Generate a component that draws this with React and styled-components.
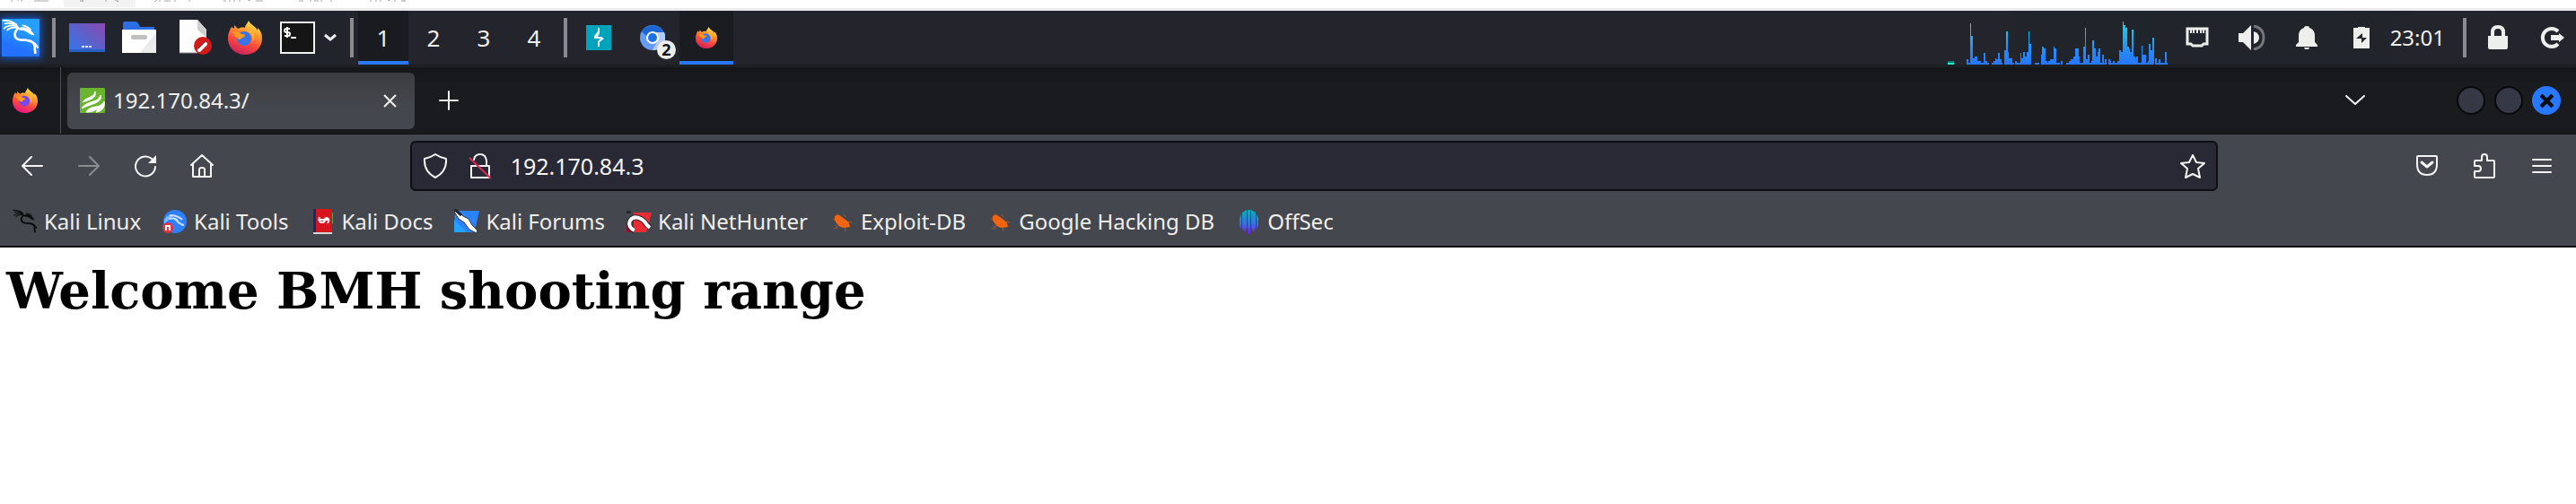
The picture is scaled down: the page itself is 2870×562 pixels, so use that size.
import React from "react";
import styled, { createGlobalStyle, css } from "styled-components";

const GlobalStyle = createGlobalStyle`
  *, *::before, *::after { box-sizing: border-box; }
  html, body { margin: 0; background: #ffffff; }
  body { font-family: "Noto Sans", sans-serif; color: #eeeeec; }
  svg { display: block; flex: none; }
`;

const plainButton = css`
  display: flex;
  align-items: center;
  justify-content: center;
  flex: none;
  margin: 0;
  padding: 0;
  border: 0;
  background: transparent;
  color: inherit;
  font: inherit;
  cursor: pointer;
`;

/* ---------- host window strip ---------- */
const HostStrip = styled.div`
  height: 12px;
  overflow: hidden;
  background: #ffffff;
  border-bottom: 3px solid #ebebeb;
`;

/* ---------- desktop panel ---------- */
const Panel = styled.header`
  display: flex;
  align-items: stretch;
  height: 63px;
  padding: 0 12px 0 2px;
  background: linear-gradient(90deg, #20242d, #24242c 22%, #24242c 76%, #20242b 82%, #24242c);
  border-bottom: 3px solid #1d1e22;
`;

const MenuButton = styled.button`
  ${plainButton}
  align-self: center;
  width: 42px;
  height: 42px;
  background: linear-gradient(200deg, #249eff 30%, #2470ff 75%);
  box-shadow: 0 0 8px 2px #1557c8;
  color: #ffffff;
`;

const Separator = styled.span`
  flex: none;
  align-self: center;
  width: 4px;
  height: 44px;
  margin: 0 ${(p) => p.$right}px 0 ${(p) => p.$left}px;
  background: #8b8b8f;
`;

const Launcher = styled.button`
  ${plainButton}
  width: ${(p) => p.$width || 58}px;
`;

const Workspace = styled.button`
  ${plainButton}
  width: 56px;
  padding-top: 4px;
  font-size: 26px;
  border-bottom: 4px solid ${(p) => (p.$active ? "#2777ff" : "transparent")};
  background: ${(p) => (p.$active ? "#1a1b20" : "transparent")};
`;

const Task = styled.button`
  ${plainButton}
  position: relative;
  width: 60px;
  padding-top: 4px;
  border-bottom: 4px solid ${(p) => (p.$active ? "#2777ff" : "transparent")};
  background: ${(p) => (p.$active ? "#1b1b22" : "transparent")};
`;

const Badge = styled.span`
  position: absolute;
  right: 4px;
  bottom: 2px;
  width: 21px;
  height: 21px;
  border-radius: 50%;
  background: #eeeeec;
  color: #111111;
  font: 700 18px/21px "Noto Sans", sans-serif;
  text-align: center;
`;

const Tray = styled.div`
  display: flex;
  align-items: stretch;
  margin-left: auto;
`;

const TrayIcons = styled.div`
  display: flex;
  gap: 33px;
  margin-left: ${(p) => p.$left || 0}px;
`;

const TrayButton = styled.button`
  ${plainButton}
  width: 28px;
`;

const Clock = styled.time`
  align-self: center;
  margin-left: 18px;
  font-size: 24px;
  line-height: 32px;
`;

/* ---------- browser tabs ---------- */
const TabBar = styled.div`
  display: flex;
  align-items: center;
  height: 75px;
  padding-right: 17px;
  background: linear-gradient(#141519, #1a1b1f 25%);
  border-bottom: 1px solid #0e0e11;
`;

const PinnedView = styled.button`
  ${plainButton}
  width: 68px;
  height: 100%;
  padding-right: 12px;
  border-right: 1px solid #4a4b50;
  margin-right: 7px;
`;

const Tab = styled.div`
  display: flex;
  align-items: center;
  flex: none;
  width: 387px;
  height: 63px;
  padding: 0 14px;
  border-radius: 6px;
  background: linear-gradient(#3b3c40, #45474e 60%);
`;

const TabTitle = styled.span`
  flex: 1;
  padding-left: 9px;
  font-size: 24px;
  line-height: 32px;
`;

const TabClose = styled.button`
  ${plainButton}
  width: 28px;
  height: 28px;
`;

const ToolButton = styled.button`
  ${plainButton}
  width: ${(p) => p.$width || 63}px;
  height: 56px;
  opacity: ${(p) => (p.disabled ? 0.4 : 1)};
`;

const WindowControls = styled.div`
  display: flex;
  gap: 10px;
  margin-left: 88px;
`;

const WindowControl = styled.button`
  ${plainButton}
  width: 32px;
  height: 32px;
  border: ${(p) => (p.$close ? 0 : "2px solid #08090b")};
  border-radius: 50%;
  background: ${(p) => (p.$close ? "#2777ff" : "#353945")};
  color: #0b0c10;
`;

const Push = styled.span`
  flex: 1;
`;

/* ---------- browser toolbar ---------- */
const Toolbar = styled.div`
  display: flex;
  align-items: center;
  height: 63px;
  padding: 7px 6px 0 4px;
  background: #44474e;
`;

const Spring = styled.span`
  flex: 10 1 0;
`;

const UrlBar = styled.label`
  display: flex;
  align-items: center;
  flex: 99 1 0;
  min-width: 0;
  height: 56px;
  padding: 0 12px;
  border: 2px solid #0d0e11;
  border-radius: 6px;
  background: #282934;
`;

const UrlInput = styled.input`
  flex: 1;
  min-width: 0;
  height: 40px;
  margin: 0 0 0 20px;
  padding: 0;
  border: 0;
  outline: 0;
  background: transparent;
  color: #f4f4f4;
  font: 25px/32px "Noto Sans", sans-serif;
`;

const UrlIcon = styled.button`
  ${plainButton}
  width: 28px;
  height: 40px;
  margin-right: ${(p) => p.$gap || 0}px;
`;

const Bookmarks = styled.nav`
  display: flex;
  align-items: center;
  gap: 24px;
  height: 63px;
  padding: 6px 14px 0;
  overflow: hidden;
  background: #44474e;
  border-bottom: 2px solid #0c0c0f;
`;

const Bookmark = styled.a`
  display: flex;
  align-items: center;
  flex: none;
  gap: 7px;
  color: inherit;
  font-size: 24px;
  line-height: 32px;
  text-decoration: none;
  white-space: nowrap;
`;

const Page = styled.main`
  padding: 16px 7px;
  color: #000000;
`;

const Title = styled.h1`
  margin: 0;
  font: 700 56px/64px "DejaVu Serif", serif;
`;

/* ---------- drawings ---------- */
const HostTabs = () => (
  <svg width="470" height="9" viewBox="0 0 470 9" aria-hidden="true">
    <path d="M71 0h80v6q0 2-2 2H73q-2 0-2-2z" fill="#f3f3f3" />
    <path
      d="M13 0v2M20 0v1M24 0v2M38 1h16M89 1h4M92 0v2M118 0v2M128 0l4 2M131 0v2M172 2l3-2M178 0v2M183 1h7M195 0v2M211 0v2M249 1h3M256 0v2M261 0v2M267 0v2M276 1l3-1M285 1h8M333 1h5M346 0v2M350 1h5M358 0v2M369 0v2M413 0v2M419 0v2M424 0v2M432 1l3-1M440 0v2M447 1h5M450 0v2"
      fill="none"
      stroke="#aaaaaa"
      strokeWidth="1"
    />
  </svg>
);

const Dragon = ({ size, color }) => (
  <svg width={size} height={size} viewBox="0 0 126 126">
    <g fill="none" stroke={color} strokeLinecap="round" strokeLinejoin="round">
      <path d="M4 6q24-2 44 12M10 16q20-4 40 6M8 32q14-14 42-8M18 38q12-12 34-8" strokeWidth="5" />
      <path d="M44 22q8 2 10 10-12 12-10 24 2 12 18 14 28 0 40 8 8 6 8 14 0 10 2 22" strokeWidth="8" />
      <path d="M100 76q14 6 20 20" strokeWidth="6" />
      <path d="M54 32q20-6 34 2 12 6 20 20-14-2-22-10-10-8-26-8z" fill={color} strokeWidth="3" />
      <path d="M70 22q18 4 26 14" strokeWidth="5" />
    </g>
  </svg>
);

const Firefox = ({ size, id, purple }) => (
  <svg width={size} height={size} viewBox="0 0 38 38">
    <defs>
      <linearGradient id={id} x1="0.75" y1="0" x2="0.35" y2="1">
        <stop offset="0" stopColor="#fff04a" />
        <stop offset="0.35" stopColor="#ff9a2e" />
        <stop offset="0.65" stopColor="#ff4a3d" />
        <stop offset="1" stopColor={purple ? "#e8128c" : "#c8205c"} />
      </linearGradient>
    </defs>
    <path
      d="M23 0c-1 3-4 5-4 8-3-1-6 0-8 1L7 5v4L4 7C2 10 0 14 0 20c0 10 8 18 19 18s19-8 19-18c0-6-2-9-5-12v3C31 6 25 5 23 0z"
      fill={`url(#${id})`}
    />
    <circle cx="18" cy="20" r="8" fill={purple ? "#7a48e8" : "#3a73e8"} />
    <path d="M6 13c4-1 7 0 9 2 2 0 4 0 4 2-2 2-4 2-5 4-3 0-6-3-8-8z" fill="#ff9c1c" />
    <path d="M22 12c5 2 7 7 5 12 3-3 3-9 0-12-1-2-3-2-5 0z" fill="#ffb43a" />
  </svg>
);

const DesktopIcon = () => (
  <svg width="40" height="32" viewBox="0 0 40 32">
    <defs>
      <linearGradient id="desk" x1="0" y1="1" x2="1" y2="0.1">
        <stop offset="0" stopColor="#2e78f0" />
        <stop offset="0.5" stopColor="#5a62cc" />
        <stop offset="1" stopColor="#844bb0" />
      </linearGradient>
    </defs>
    <path d="M0 0h40v32H0z" fill="url(#desk)" />
    <path d="M0 29h40v3H0z" fill="#2660c0" />
    <path d="M14 25h3v2h-3zM18 25h3v2h-3zM22 25h3v2h-3z" fill="#e8ecff" />
  </svg>
);

const FolderIcon = () => (
  <svg width="38" height="36" viewBox="0 0 38 36">
    <path d="M1 10V2q0-2 2-2h12q2 0 3 2l2 4h16v5H1z" fill="#2d6ee4" />
    <path d="M0 9h38v26H0z" fill="#ffffff" />
    <path d="M38 12v23H20q8-10 18-23z" fill="#ececec" />
    <rect x="10" y="15" width="18" height="5" rx="2" fill="#c0c0c0" />
  </svg>
);

const DocumentIcon = () => (
  <svg width="48" height="40" viewBox="0 0 48 40">
    <path d="M11 0h20l10 11v26H11z" fill="#fdfdfd" />
    <path d="M31 0l10 12v8L31 11z" fill="#cfcfcf" />
    <path d="M11 37h20" stroke="#8a8a8a" />
    <circle cx="37" cy="29" r="10" fill="#d11a1a" />
    <path d="M33 34l7-7" stroke="#fff" strokeWidth="4" strokeLinecap="round" />
    <path d="M32 32l8-8" stroke="#a80e0e" strokeWidth="1" />
  </svg>
);

const TerminalIcon = () => (
  <svg width="39" height="36" viewBox="0 0 39 36">
    <path d="M1 1h37v34H1z" fill="#151515" stroke="#f2f2f2" strokeWidth="2" />
    <path d="M11 8H7q-2 0-2 2t2 2h2q2 0 2 2t-2 2H5M8 6v12M12 18h6" fill="none" stroke="#fff" strokeWidth="2" />
  </svg>
);

const PanelChevron = () => (
  <svg width="14" height="10" viewBox="0 0 14 10">
    <path d="M1 2l6 5 6-5" fill="none" stroke="#eeeeec" strokeWidth="3" />
  </svg>
);

const BurpIcon = () => (
  <svg width="28" height="28" viewBox="0 0 28 28">
    <path d="M0 0h28v28H0z" fill="#00a3bb" />
    <path d="M13 3h2v6l-2 4h4l3 2-5 4v5h-2v-6l3-3H9v-3l4-5z" fill="#e8fbff" />
  </svg>
);

const ChromiumIcon = () => (
  <svg width="28" height="28" viewBox="0 0 28 28">
    <circle cx="14" cy="14" r="14" fill="#659cf5" />
    <path d="M2 7a14 14 0 0 1 24 0l1 2H14a6 6 0 0 0-6 4z" fill="#1b66d2" />
    <path d="M14 8h13a14 14 0 0 1-13 20l6-11z" fill="#b2cdfb" />
    <circle cx="14" cy="14" r="7" fill="#ffffff" />
    <circle cx="14" cy="14" r="5" fill="#1a73e8" />
  </svg>
);

// Each entry: start, end and top of a bar, in thirds of a pixel.
const LOAD = [
  [123,129,198],[129,135,210],[135,138,78],[138,144,120],[144,150,195],[150,159,189],[159,171,204],[171,180,210],
  [180,186,177],[186,192,204],[192,198,210],[207,213,210],[213,219,204],[219,222,195],[222,228,198],[228,234,177],
  [234,240,198],[240,243,210],[249,255,168],[255,261,105],[261,264,174],[264,276,195],[276,282,210],[285,291,204],
  [291,303,210],[303,306,177],[306,312,195],[312,318,174],[318,324,189],[324,330,174],[330,333,105],[333,339,147],
  [351,366,210],[372,375,183],[375,381,156],[381,387,162],[387,393,204],[393,396,210],[396,402,204],[402,414,198],
  [414,417,156],[417,423,162],[423,435,210],[438,444,204],[456,465,210],[465,471,204],[471,480,198],[480,486,189],
  [486,498,162],[498,501,189],[501,513,210],[513,519,156],[519,522,93],[522,528,198],[528,534,183],[534,540,210],
  [540,543,204],[543,549,135],[549,555,162],[555,561,189],[561,564,174],[564,570,162],[570,576,210],[576,582,183],
  [582,585,210],[585,591,198],[597,603,198],[603,606,204],[606,612,210],[612,618,204],[618,627,210],[627,633,204],
  [633,639,168],[639,645,174],[645,648,72],[648,654,84],[654,660,93],[660,666,156],[666,669,162],[669,675,174],
  [675,681,99],[681,687,189],[687,690,195],[690,696,189],[696,708,210],[708,711,153],[711,723,183],[723,729,210],
  [729,732,204],[732,738,147],[738,744,168],[744,750,126],[753,759,195],[759,765,210],[765,771,198],[771,786,210],
  [786,792,174],[792,795,210],
];

const LoadGraph = () => (
  <svg width="245" height="60" viewBox="60 36 735 180" shapeRendering="crispEdges" aria-label="CPU load">
    <defs>
      <linearGradient id="load" gradientUnits="userSpaceOnUse" x1="0" y1="72" x2="0" y2="216">
        <stop offset="0" stopColor="#0cdbf0" />
        <stop offset="0.2" stopColor="#13c4ee" />
        <stop offset="0.7" stopColor="#2489fa" />
        <stop offset="1" stopColor="#2777ff" />
      </linearGradient>
    </defs>
    <path d="M60 204h21v6H60z" fill="#117a74" />
    <path d="M60 210h21v6H60z" fill="#0dffe0" />
    <path d={LOAD.map(([a, b, y]) => `M${a} ${y}H${b}V216H${a}z`).join("")} fill="url(#load)" />
  </svg>
);

const EthernetIcon = () => (
  <svg width="26" height="24" viewBox="0 0 26 24">
    <path d="M2 2h22v17h-4l-2 2H8l-2-2H2z" fill="none" stroke="#eeeeec" strokeWidth="3" />
    <path d="M6 3v4M9 3v4M13 3v4M17 3v4M20 3v4" stroke="#eeeeec" strokeWidth="2" />
  </svg>
);

const VolumeIcon = () => (
  <svg width="30" height="28" viewBox="0 0 30 28">
    <path d="M0 9h5l9-9v28l-9-9H0z" fill="#eeeeec" />
    <path d="M17 7q6 2 6 7t-6 7z" fill="#eeeeec" />
    <path d="M17 1q11 2 11 13T17 27" fill="none" stroke="#75767b" strokeWidth="3" />
  </svg>
);

const BellIcon = () => (
  <svg width="24" height="26" viewBox="0 0 24 26">
    <path d="M12 0q3 0 3 2 6 2 6 9v7l3 3v2H0v-2l3-3v-7q0-7 6-9 0-2 3-2zM9 24h6l-1 2h-4z" fill="#eeeeec" />
  </svg>
);

const BatteryIcon = () => (
  <svg width="18" height="24" viewBox="0 0 18 24">
    <path d="M0 1h5V0h8v1h5v23H0z" fill="#eeeeec" />
    <path d="M10 7v5h5l-6 6v-5H3z" fill="#23242b" />
  </svg>
);

const PanelLock = () => (
  <svg width="24" height="28" viewBox="0 0 24 28">
    <path d="M6 13V8q0-6 6-6t6 6v5" fill="none" stroke="#eeeeec" strokeWidth="4" />
    <path d="M1 12h22v13q0 2-2 2H3q-2 0-2-2z" fill="#eeeeec" />
  </svg>
);

const LogoutIcon = () => (
  <svg width="28" height="24" viewBox="0 0 28 24">
    <path d="M20 5A10 10 0 1 0 20 19" fill="none" stroke="#eeeeec" strokeWidth="4" />
    <path d="M12 9h9V7l6 5-6 5v-2h-9z" fill="#eeeeec" />
  </svg>
);

const Favicon = () => (
  <svg width="28" height="28" viewBox="0 0 28 28">
    <rect width="28" height="28" rx="1" fill="#69b52f" />
    <path d="M3 16C8 9 15 12 17 4c2 8-6 9-14 12zM2 23C8 13 20 18 23 8c3 9-12 10-21 15zM7 27c5-9 16-3 20-12 2 9-6 12-9 12 1-2 2-3 2-4-3 2-6 4-13 4z" fill="#fff" stroke="#fff" strokeWidth="1" />
  </svg>
);

const line = { fill: "none", stroke: "#f4f4f4", strokeWidth: 2, strokeLinecap: "round", strokeLinejoin: "round" };

const Cross = ({ size, width }) => (
  <svg width={size} height={size} viewBox="0 0 14 14">
    <path d="M1 1l12 12M13 1L1 13" fill="none" stroke="currentColor" strokeWidth={width} />
  </svg>
);
const Plus = () => (
  <svg width="22" height="22" viewBox="0 0 22 22"><path d="M11 1v20M1 11h20" {...line} /></svg>
);
const TabsChevron = () => (
  <svg width="22" height="12" viewBox="0 0 22 12"><path d="M1 1l10 9L21 1" {...line} /></svg>
);
const Back = () => (
  <svg width="24" height="22" viewBox="0 0 24 22"><path d="M11 1L1 11l10 10M1 11h22" {...line} /></svg>
);
const Forward = () => (
  <svg width="24" height="22" viewBox="0 0 24 22"><path d="M13 1l10 10-10 10M23 11H1" {...line} /></svg>
);
const Reload = () => (
  <svg width="26" height="26" viewBox="0 0 26 26">
    <path d="M20 5A11 11 0 1 0 24 14" {...line} />
    <path d="M25 1v9h-9z" fill="#f4f4f4" />
  </svg>
);
const Home = () => (
  <svg width="26" height="28" viewBox="0 0 26 28">
    <path d="M1 13L13 2l12 11M3 12v14h20V12M10 26v-8q0-2 3-2t3 2v8" {...line} />
  </svg>
);
const Shield = () => (
  <svg width="28" height="28" viewBox="0 0 28 28">
    <path d="M14 1q6 4 12 5 1 14-12 21Q1 20 2 6q6-1 12-5z" {...line} />
  </svg>
);
const Insecure = () => (
  <svg width="26" height="28" viewBox="0 0 26 28">
    <path d="M6 7q1-6 7-6t7 7v6M3 14h20v13H3z" {...line} />
    <path d="M1 5l24 23" stroke="#e22850" strokeWidth="2" />
  </svg>
);
const Star = () => (
  <svg width="28" height="28" viewBox="0 0 28 28">
    <path d="M14 2l4 8 9 1-7 6 2 10-8-4-8 4 2-10-7-6 9-1z" {...line} />
  </svg>
);
const Pocket = () => (
  <svg width="24" height="24" viewBox="0 0 24 24">
    <path d="M2 1h20q1 0 1 1v8q0 12-11 12T1 10V2q0-1 1-1z" {...line} />
    <path d="M6 8l6 5 6-5" {...line} strokeWidth="3" />
  </svg>
);
const Extension = () => (
  <svg width="24" height="30" viewBox="0 0 24 30">
    <path d="M2 9h7V5q0-3 3-3t3 3v4h7q1 0 1 1v17q0 1-1 1H2q-1 0-1-1v-6h4q3 0 3-3t-3-3H1v-5q0-1 1-1z" {...line} />
  </svg>
);
const Hamburger = () => (
  <svg width="22" height="18" viewBox="0 0 22 18"><path d="M1 2h20M1 9h20M1 16h20" {...line} /></svg>
);

const ToolsIcon = () => (
  <svg width="28" height="28" viewBox="0 0 28 28">
    <circle cx="14" cy="14" r="13" fill="#2d80ff" />
    <path d="M2 12q5-8 10-4-6 4-10 9z" fill="#83baff" />
    <path d="M8 7q9 0 14 5M7 11q9-2 10 3 0 2 7 4M12 10l10 8" fill="none" stroke="#c9deff" strokeWidth="2" />
    <circle cx="6" cy="21" r="6" fill="#e8323c" />
    <path d="M3 19h6M4 19v5M8 19v5" stroke="#fff" strokeWidth="2" />
  </svg>
);
const DocsIcon = () => (
  <svg width="28" height="28" viewBox="0 0 28 28">
    <path d="M4 0h3v27H4z" fill="#122a72" />
    <path d="M7 0h17q1 0 1 1v25H7z" fill="#d8141c" />
    <path d="M25 4h1v12h-1z" fill="#49a05a" />
    <path d="M4 26h21v2H4z" fill="#d8d8dc" />
    <path d="M11 9q-2 6 3 6 3 0 3-3 0-2 2-2 4 1 1 6M10 12h11" fill="none" stroke="#fff" strokeWidth="2" />
  </svg>
);
const ForumsIcon = () => (
  <svg width="28" height="28" viewBox="0 0 28 28">
    <path d="M1 2h27l-4 18-2 6H0z" fill="#2b83fa" />
    <path d="M0 12l14 14H0z" fill="#25a1ff" />
    <path d="M0 3l4-1 6 6 6 3 4 7 6 6-1 3-8-4-6-8-6-4z" fill="#fff" stroke="#30343c" strokeWidth="1" />
    <path d="M0 0l8 7" stroke="#23252b" strokeWidth="3" />
  </svg>
);
const NetHunterIcon = () => (
  <svg width="28" height="28" viewBox="0 0 28 28">
    <path d="M8 4h20l-3 12-3 10H8z" fill="#ea2b34" />
    <path d="M0 2h5v3H0z" fill="#26282e" />
    <path d="M0 18h5v8H0z" fill="#9d0e2d" />
    <path d="M9 25Q1 20 4 13q4-6 12-2 5 3 6 6l5 4" fill="none" stroke="#26282e" strokeWidth="6" />
    <path d="M9 24Q1 20 4 13q4-6 12-2 5 3 6 6l4 4" fill="none" stroke="#fff" strokeWidth="4" />
  </svg>
);
const BugIcon = () => (
  <svg width="28" height="28" viewBox="0 0 28 28">
    <path d="M4 11l5 3M8 5l5 4M18 9l-2-3M20 14l5 1M7 20l5-2M18 25l-1-4M5 22l4-1" fill="none" stroke="#a05a30" strokeWidth="1" />
    <path d="M6 8q4-3 8 1 6 4 8 7l1 4-6 1q-5 0-8-4-4-4-3-9z" fill="#f2640f" />
  </svg>
);
const OffSecIcon = () => (
  <svg width="28" height="28" viewBox="0 0 28 28">
    <defs>
      <linearGradient id="offsec" x1="0" y1="0" x2="0" y2="28" gradientUnits="userSpaceOnUse">
        <stop offset="0.1" stopColor="#12a6bc" />
        <stop offset="0.6" stopColor="#3a6fd8" />
        <stop offset="1" stopColor="#6a1fd6" />
      </linearGradient>
    </defs>
    <path d="M13 1h3v27h-3zM7 4l5-3v20l-2 5-3-4zM17 1l5 3v18l-3 4-2-5zM4 10l2-4v17l-2-5zM23 6l2 4v8l-2 5z" fill="url(#offsec)" />
  </svg>
);

const BOOKMARKS = [
  ["Kali Linux", <Dragon key="k" size={28} color="#08090b" />],
  ["Kali Tools", <ToolsIcon key="t" />],
  ["Kali Docs", <DocsIcon key="d" />],
  ["Kali Forums", <ForumsIcon key="f" />],
  ["Kali NetHunter", <NetHunterIcon key="n" />],
  ["Exploit-DB", <BugIcon key="e" />],
  ["Google Hacking DB", <BugIcon key="g" />],
  ["OffSec", <OffSecIcon key="o" />],
];

export default function App() {
  return (
    <>
      <GlobalStyle />
      <HostStrip><HostTabs /></HostStrip>

      <Panel>
        <MenuButton aria-label="Applications"><Dragon size={42} color="#ffffff" /></MenuButton>
        <Separator $left={14} $right={6} />
        <Launcher aria-label="Show desktop"><DesktopIcon /></Launcher>
        <Launcher aria-label="Files"><FolderIcon /></Launcher>
        <Launcher aria-label="Text editor"><DocumentIcon /></Launcher>
        <Launcher $width={62} aria-label="Firefox"><Firefox size={38} id="ff1" /></Launcher>
        <Launcher $width={54} aria-label="Terminal"><TerminalIcon /></Launcher>
        <Launcher $width={20} aria-label="More launchers"><PanelChevron /></Launcher>
        <Separator $left={12} $right={5} />
        {["1", "2", "3", "4"].map((n) => (
          <Workspace key={n} $active={n === "1"}>{n}</Workspace>
        ))}
        <Separator $left={5} $right={5} />
        <Task aria-label="Burp Suite"><BurpIcon /></Task>
        <Task aria-label="Chromium windows"><ChromiumIcon /><Badge>2</Badge></Task>
        <Task $active aria-label="Firefox window"><Firefox size={24} id="ff2" /></Task>

        <Tray>
          <LoadGraph />
          <TrayIcons $left={19}>
            <TrayButton aria-label="Network"><EthernetIcon /></TrayButton>
            <TrayButton aria-label="Volume"><VolumeIcon /></TrayButton>
            <TrayButton aria-label="Notifications"><BellIcon /></TrayButton>
            <TrayButton aria-label="Power"><BatteryIcon /></TrayButton>
          </TrayIcons>
          <Clock>23:01</Clock>
          <Separator $left={20} $right={21} />
          <TrayIcons>
            <TrayButton aria-label="Lock screen"><PanelLock /></TrayButton>
            <TrayButton aria-label="Log out"><LogoutIcon /></TrayButton>
          </TrayIcons>
        </Tray>
      </Panel>

      <TabBar>
        <PinnedView aria-label="Firefox View"><Firefox size={28} id="ff3" purple /></PinnedView>
        <Tab>
          <Favicon />
          <TabTitle>192.170.84.3/</TabTitle>
          <TabClose aria-label="Close tab"><Cross size={15} width={2} /></TabClose>
        </Tab>
        <ToolButton $width={76} aria-label="New tab"><Plus /></ToolButton>
        <Push />
        <ToolButton $width={50} aria-label="List all tabs"><TabsChevron /></ToolButton>
        <WindowControls>
          <WindowControl aria-label="Minimize" />
          <WindowControl aria-label="Maximize" />
          <WindowControl $close aria-label="Close"><Cross size={15} width={4} /></WindowControl>
        </WindowControls>
      </TabBar>

      <Toolbar>
        <ToolButton aria-label="Back"><Back /></ToolButton>
        <ToolButton aria-label="Forward" disabled><Forward /></ToolButton>
        <ToolButton aria-label="Reload"><Reload /></ToolButton>
        <ToolButton aria-label="Home"><Home /></ToolButton>
        <Spring />
        <UrlBar>
          <UrlIcon $gap={22} aria-label="Tracking protection"><Shield /></UrlIcon>
          <UrlIcon aria-label="Connection not secure"><Insecure /></UrlIcon>
          <UrlInput type="text" aria-label="Address" defaultValue="192.170.84.3" />
          <UrlIcon aria-label="Bookmark this page"><Star /></UrlIcon>
        </UrlBar>
        <Spring />
        <ToolButton $width={64} aria-label="Save to Pocket"><Pocket /></ToolButton>
        <ToolButton $width={64} aria-label="Extensions"><Extension /></ToolButton>
        <ToolButton $width={64} aria-label="Open menu"><Hamburger /></ToolButton>
      </Toolbar>

      <Bookmarks>
        {BOOKMARKS.map(([name, icon]) => (
          <Bookmark key={name} href="#">{icon}{name}</Bookmark>
        ))}
      </Bookmarks>

      <Page><Title>Welcome BMH shooting range</Title></Page>
    </>
  );
}
